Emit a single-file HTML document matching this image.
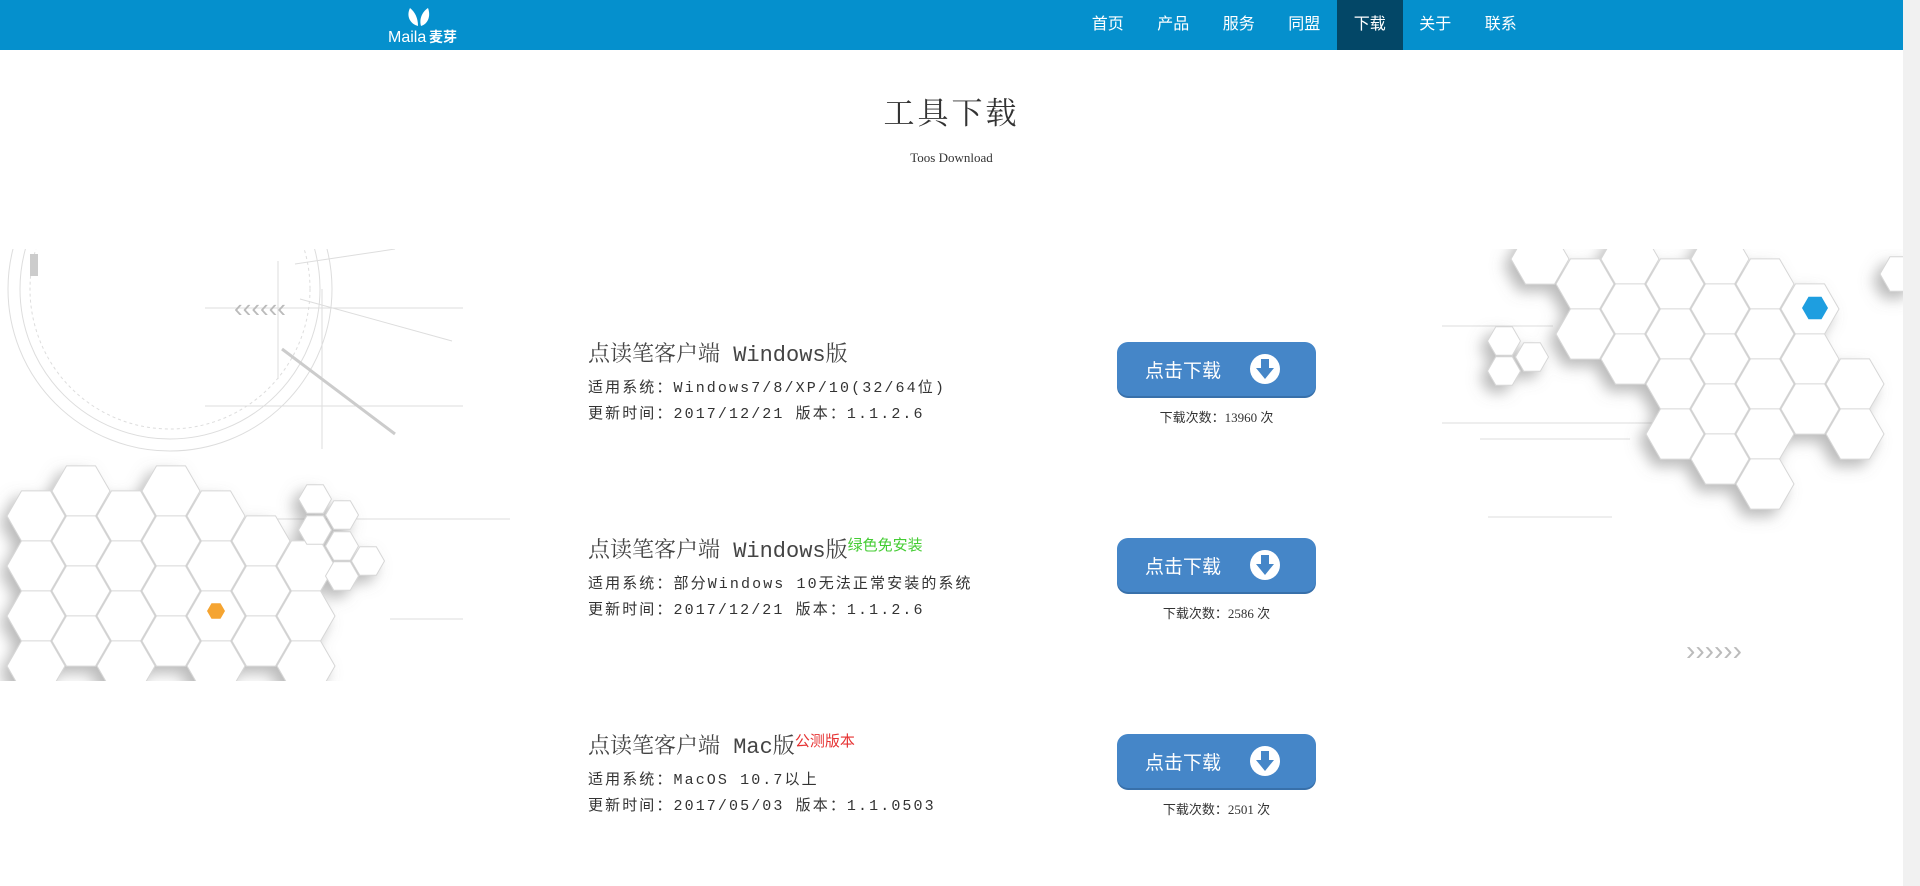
<!DOCTYPE html>
<html><head><meta charset="utf-8"><style>
*{margin:0;padding:0;box-sizing:border-box}
body{width:1920px;height:886px;overflow:hidden;background:#fff;font-family:"Liberation Sans","Noto Sans CJK SC",sans-serif;position:relative}
.hdr{position:absolute;left:0;top:0;width:1903px;height:50px;background:#0590cd}
.nav{position:absolute;top:0;height:50px;display:flex;left:1075px}
.nav a{display:block;width:65.5px;height:50px;line-height:50px;text-align:center;color:#fff;font-size:16px;text-decoration:none}
.nav a.on{background:#034767}
.sb{position:absolute;left:1903px;top:0;width:17px;height:886px;background:#f1f1f1}
.th{position:absolute;left:1905px;top:526px;width:13px;height:97px;background:#c1c1c1}
.t1{position:absolute;left:0;width:1903px;text-align:center;top:88px;font-size:31px;color:#333;letter-spacing:3px;font-family:"Noto Serif CJK SC",serif}
.t2{position:absolute;left:0;width:1903px;text-align:center;top:150px;font-size:13px;color:#333;font-family:"Liberation Serif",serif}
.row{position:absolute;left:588px;font-family:"Liberation Mono","Noto Sans CJK SC",monospace;color:#333}
.row .a{font-size:22px;height:30px;line-height:30px;color:#444;font-family:"Liberation Mono","Noto Serif CJK SC",monospace}
.row .a sup{font-family:"Liberation Sans","Noto Sans CJK SC",sans-serif;font-size:15px;vertical-align:top;position:relative;top:-6px}
.row .b{font-size:15px;letter-spacing:2.1px;line-height:26px;margin-top:5px}
.btn{position:absolute;left:1117px;width:199px;height:54px;background:#4586c8;border-radius:11px;box-shadow:0 2px 0 #3870aa;color:#fff;font-size:19px}
.btn span{position:absolute;left:28px;top:14px}
.btn svg{position:absolute;left:132px;top:11px}
.cnt{position:absolute;left:1117px;width:199px;text-align:center;font-size:13px;color:#333;font-family:"Liberation Serif","Noto Sans CJK SC",serif}
</style></head><body>
<svg style="position:absolute;left:0;top:249px" width="514" height="432" id="L"></svg>
<svg style="position:absolute;left:1430px;top:249px" width="473" height="432" id="R"></svg>
<div class="hdr">
<svg style="position:absolute;left:388px;top:4px" width="90" height="42">
<path d="M22 4 C18 12 22 20 30 22 C30 14 27 8 22 4Z" fill="#fff"/><path d="M40 4 C34 8 31 15 33 22 C40 20 43 12 40 4Z" fill="#fff"/>
<text x="0" y="38" fill="#fff" font-size="16" font-family="Liberation Sans,sans-serif">Maila</text><text x="41" y="38" fill="#fff" font-size="14" font-family="Noto Sans CJK SC,sans-serif" font-weight="bold">麦芽</text></svg>
<div class="nav"><a>首页</a><a>产品</a><a>服务</a><a>同盟</a><a class="on">下载</a><a>关于</a><a>联系</a></div>
</div>
<div class="sb"><div class="th"></div></div>
<div class="t1">工具下载</div>
<div class="t2">Toos Download</div>

<div class="row" style="top:341px"><div class="a">点读笔客户端 Windows版</div><div class="b">适用系统：Windows7/8/XP/10(32/64位)<br>更新时间：2017/12/21 版本：1.1.2.6</div></div>
<div class="row" style="top:537px"><div class="a">点读笔客户端 Windows版<sup style="color:#44cc33">绿色免安装</sup></div><div class="b">适用系统：部分Windows 10无法正常安装的系统<br>更新时间：2017/12/21 版本：1.1.2.6</div></div>
<div class="row" style="top:733px"><div class="a">点读笔客户端 Mac版<sup style="color:#e63333">公测版本</sup></div><div class="b">适用系统：MacOS 10.7以上<br>更新时间：2017/05/03 版本：1.1.0503</div></div>

<div class="btn" style="top:342px"><span>点击下载</span><svg width="32" height="32"><circle cx="16" cy="16" r="15" fill="#fff"/><path d="M12 6h8v9h5l-9 11-9-11h5z" fill="#4586c8"/></svg></div>
<div class="cnt" style="top:407px">下载次数：13960 次</div>
<div class="btn" style="top:538px"><span>点击下载</span><svg width="32" height="32"><circle cx="16" cy="16" r="15" fill="#fff"/><path d="M12 6h8v9h5l-9 11-9-11h5z" fill="#4586c8"/></svg></div>
<div class="cnt" style="top:603px">下载次数：2586 次</div>
<div class="btn" style="top:734px"><span>点击下载</span><svg width="32" height="32"><circle cx="16" cy="16" r="15" fill="#fff"/><path d="M12 6h8v9h5l-9 11-9-11h5z" fill="#4586c8"/></svg></div>
<div class="cnt" style="top:799px">下载次数：2501 次</div>

<script>
function hex(cx,cy,w,fill,stroke){var h=w*0.866,p=[[cx-w/2,cy],[cx-w/4,cy-h/2],[cx+w/4,cy-h/2],[cx+w/2,cy],[cx+w/4,cy+h/2],[cx-w/4,cy+h/2]];return '<polygon points="'+p.map(function(a){return a[0].toFixed(1)+","+a[1].toFixed(1)}).join(" ")+'" fill="'+fill+'" stroke="'+stroke+'" stroke-width="1"/>';}
var defs='<defs><filter id="sh" x="-50%" y="-50%" width="200%" height="200%"><feDropShadow dx="-7" dy="7" stdDeviation="7" flood-color="#777" flood-opacity="0.5"/></filter></defs>';
var s=defs;
s+='<g stroke="#ddd" fill="none" stroke-width="1"><circle cx="170" cy="40" r="150"/><circle cx="170" cy="40" r="162"/><circle cx="170" cy="40" r="140" stroke-dasharray="3 3"/><line x1="205" y1="59" x2="463" y2="59"/><line x1="205" y1="157" x2="463" y2="157"/><line x1="300" y1="50" x2="452" y2="92"/><line x1="322" y1="40" x2="322" y2="200"/><line x1="295" y1="15" x2="395" y2="0"/><line x1="243" y1="270" x2="510" y2="270"/><line x1="390" y1="370" x2="463" y2="370"/><line x1="278" y1="12" x2="278" y2="130"/></g>';
s+='<line x1="282" y1="100" x2="395" y2="185" stroke="#ccc" stroke-width="3"/><rect x="30" y="5" width="8" height="22" fill="#ccc"/>';
s+='<text x="234" y="68" fill="#bbb" font-size="26" font-family="Liberation Sans">‹‹‹‹‹‹</text>';
var g='<g filter="url(#sh)">';
var cells=[[0,4],[0,5],[0,6],[0,7],[1,3],[1,4],[1,5],[1,6],[2,4],[2,5],[2,6],[2,7],[3,3],[3,4],[3,5],[3,6],[4,4],[4,5],[4,6],[4,7],[5,4],[5,5],[5,6],[6,5],[6,6],[6,7]];
cells.forEach(function(c){var cx=36+c[0]*45,cy=c[1]*50+(c[0]%2?25:0)-25+30;g+=hex(cx,cy+62,58,"#fff","#d6d6d6");});
[[315,250],[342,266],[315,281],[342,297],[342,327],[368,312]].forEach(function(c){g+=hex(c[0],c[1],33,"#fff","#d6d6d6");});
g+='</g>';s+=g+hex(216,362,18,"#f5a431","none");
document.getElementById("L").innerHTML=s;
s=defs;
s+='<g stroke="#ddd"><line x1="12" y1="77" x2="123" y2="77"/><line x1="12" y1="174" x2="250" y2="174"/><line x1="50" y1="190" x2="200" y2="190"/><line x1="58" y1="268" x2="182" y2="268"/></g>';
s+='<text x="256" y="411" fill="#bbb" font-size="28" font-family="Liberation Sans">››››››</text>';
g='<g filter="url(#sh)">';
var rc=[[0,0],[1,0],[1,1],[2,0],[2,1],[2,2],[3,0],[3,1],[3,2],[3,3],[4,0],[4,1],[4,2],[4,3],[4,4],[5,0],[5,1],[5,2],[5,3],[5,4],[6,1],[6,2],[6,3],[7,2],[7,3]];
rc.forEach(function(c){var cx=110+c[0]*45,cy=10+c[1]*50+(c[0]%2?25:0);g+=hex(cx,cy,58,"#fff","#d6d6d6");});
g+=hex(74,92,33,"#fff","#d6d6d6")+hex(74,122,33,"#fff","#d6d6d6")+hex(102,108,33,"#fff","#d6d6d6")+hex(470,25,40,"#fff","#d6d6d6");
g+='</g>';s+=g+hex(385,59,26,"#1e9ee0","none");
document.getElementById("R").innerHTML=s;
</script>
</body></html>
